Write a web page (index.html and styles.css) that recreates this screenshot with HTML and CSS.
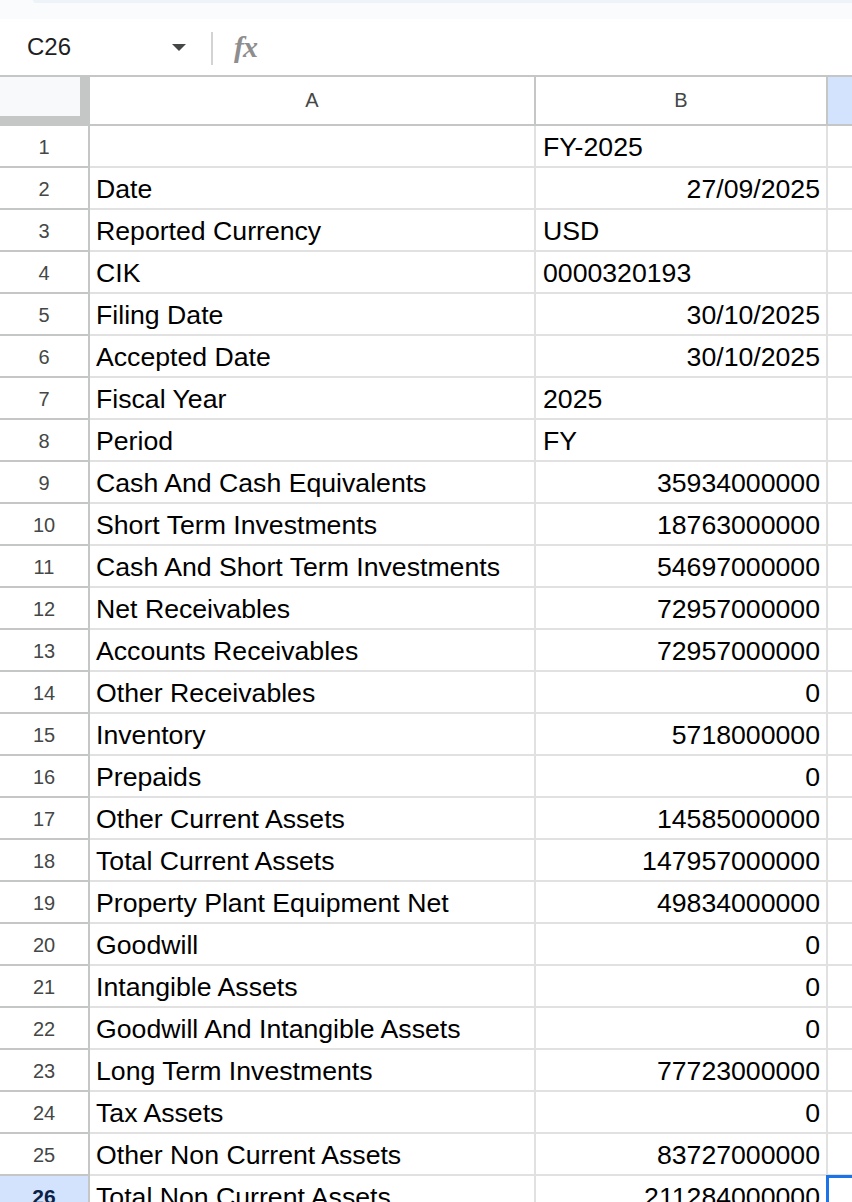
FILE: index.html
```html
<!DOCTYPE html>
<html lang="en">
<head>
    <meta charset="UTF-8">
    <meta name="viewport" content="width=device-width, initial-scale=1.0">
    <title>Balance Sheet - FY-2025</title>
    <link rel="stylesheet" href="styles.css">
</head>
<body>
    <div class="chrome">
        <div class="tab-edge"></div>
    </div>

    <div class="formula-bar">
        <div class="name-box">
            <span class="cell-ref">C26</span>
            <span class="caret"></span>
        </div>
        <span class="divider"></span>
        <span class="fx">fx</span>
    </div>

    <div class="sheet">
        <div class="row head">
            <div class="rh corner"><div class="corner-fill"></div></div>
            <div class="ca">A</div>
            <div class="cb">B</div>
            <div class="cc picked"></div>
        </div>
        <div id="sheetBody">
            <!-- rows are added by the script below -->
        </div>
    </div>

    <script>
        // label, value, alignment of the value ('l' = text, 'r' = number/date)
        const rows = [
            ['', 'FY-2025', 'l'],
            ['Date', '27/09/2025', 'r'],
            ['Reported Currency', 'USD', 'l'],
            ['CIK', '0000320193', 'l'],
            ['Filing Date', '30/10/2025', 'r'],
            ['Accepted Date', '30/10/2025', 'r'],
            ['Fiscal Year', '2025', 'l'],
            ['Period', 'FY', 'l'],
            ['Cash And Cash Equivalents', '35934000000', 'r'],
            ['Short Term Investments', '18763000000', 'r'],
            ['Cash And Short Term Investments', '54697000000', 'r'],
            ['Net Receivables', '72957000000', 'r'],
            ['Accounts Receivables', '72957000000', 'r'],
            ['Other Receivables', '0', 'r'],
            ['Inventory', '5718000000', 'r'],
            ['Prepaids', '0', 'r'],
            ['Other Current Assets', '14585000000', 'r'],
            ['Total Current Assets', '147957000000', 'r'],
            ['Property Plant Equipment Net', '49834000000', 'r'],
            ['Goodwill', '0', 'r'],
            ['Intangible Assets', '0', 'r'],
            ['Goodwill And Intangible Assets', '0', 'r'],
            ['Long Term Investments', '77723000000', 'r'],
            ['Tax Assets', '0', 'r'],
            ['Other Non Current Assets', '83727000000', 'r'],
            ['Total Non Current Assets', '211284000000', 'r']
        ];
        const activeRow = 26;

        const body = document.getElementById('sheetBody');
        rows.forEach((r, i) => {
            const n = i + 1;
            const row = document.createElement('div');
            row.className = 'row';

            const rh = document.createElement('div');
            rh.className = 'rh' + (n === activeRow ? ' picked' : '');
            rh.innerText = n;

            const a = document.createElement('div');
            a.className = 'ca';
            a.innerText = r[0];

            const b = document.createElement('div');
            b.className = 'cb' + (r[2] === 'r' ? ' num' : '');
            b.innerText = r[1];

            const c = document.createElement('div');
            c.className = 'cc' + (n === activeRow ? ' sel' : '');

            row.appendChild(rh);
            row.appendChild(a);
            row.appendChild(b);
            row.appendChild(c);
            body.appendChild(row);
        });
    </script>
</body>
</html>
```

FILE: styles.css
```css
html, body {
    margin: 0;
    padding: 0;
    height: 100%;
    overflow: hidden;
    background: #fff;
}
body {
    font-family: "Liberation Sans", Arial, sans-serif;
    color: #000;
}

/* browser strip above the toolbar */
.chrome {
    height: 19px;
    background-color: #f9fbfd;
}
.tab-edge {
    height: 3px;
    margin-left: 33px;
    background-color: #eef2f9;
    border-bottom-left-radius: 6px;
}

/* name box + formula */
.formula-bar {
    height: 56px;
    display: flex;
    align-items: center;
}
.name-box {
    width: 159px;
    padding-left: 27px;
    display: flex;
    align-items: center;
    justify-content: space-between;
}
.cell-ref {
    font-size: 24px;
    color: #1f1f1f;
}
.caret {
    width: 0;
    height: 0;
    border-left: 7px solid transparent;
    border-right: 7px solid transparent;
    border-top: 7px solid #444746;
    margin-top: 1px;
}
.divider {
    width: 2px;
    height: 33px;
    margin-left: 25px;
    margin-top: 2px;
    background-color: #d3d3d3;
}
.fx {
    margin-left: 21px;
    font-family: "Liberation Serif", serif;
    font-style: italic;
    font-weight: bold;
    font-size: 30px;
    color: #8e8e8e;
    letter-spacing: -1px;
}

/* grid */
.sheet {
    border-top: 2px solid #c4c7c5;
}
.row {
    display: flex;
    height: 40px;
    border-bottom: 2px solid #e1e1e1;
    font-size: 26.67px;
    line-height: 42px;
}
.row.head {
    height: 47px;
    line-height: 47px;
    border-bottom: 2px solid #c4c7c5;
    font-size: 20px;
    color: #444746;
}
.row.head .ca,
.row.head .cb {
    text-align: center;
    padding: 0;
    border-right-color: #c4c7c5;
}
.rh {
    width: 88px;
    flex: none;
    border-right: 2px solid #c4c7c5;
    text-align: center;
    font-size: 20px;
    color: #444746;
    box-shadow: 0 2px 0 #c4c7c5;
}
.rh.picked {
    background-color: #d3e3fd;
    color: #0b1f47;
    font-weight: bold;
    font-size: 21px;
}
.corner {
    background-color: #c4c7c5;
    box-shadow: none;
}
.corner-fill {
    width: 80px;
    height: 39px;
    background-color: #f8f9fa;
}
.ca {
    flex: none;
    width: 446px;
    box-sizing: border-box;
    border-right: 2px solid #e1e1e1;
    padding: 0 6px;
    white-space: nowrap;
    overflow: hidden;
}
.cb {
    width: 292px;
    flex: none;
    box-sizing: border-box;
    border-right: 2px solid #e1e1e1;
    padding: 0 6px 0 7px;
    white-space: nowrap;
}
.cb.num {
    text-align: right;
}
.cc {
    flex: 1;
}
.cc.picked {
    background-color: #d3e3fd;
}
.cc.sel {
    position: relative;
}
.cc.sel::after {
    content: "";
    position: absolute;
    left: -2px;
    top: -1px;
    right: -4px;
    bottom: 0;
    border-left: 3px solid #1a73e8;
    border-top: 3px solid #1a73e8;
}
```
